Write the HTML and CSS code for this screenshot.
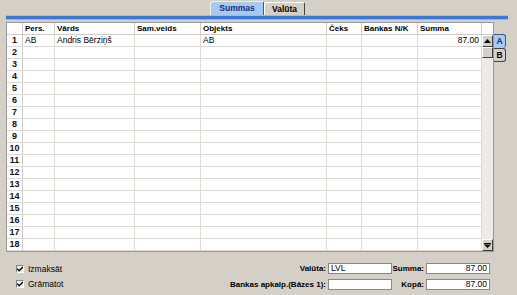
FILE: index.html
```html
<!doctype html>
<html lang="lv">
<head>
  <meta charset="utf-8"/>
  <title>Summas</title>
  <link rel="stylesheet" href="styles.css">
</head>
<body>
<div class="win">
  <div class="tabs">
    <div class="tab active">Summas</div>
    <div class="tab">Valūta</div>
  </div>
  <div class="rule"></div>

  <div class="main">
    <div class="grid">
      <div class="hd"></div><div class="hd">Pers.</div><div class="hd">Vārds</div><div class="hd">Sam.veids</div><div class="hd">Objekts</div><div class="hd">Čeks</div><div class="hd">Bankas N/K</div><div class="hd">Summa</div><div class="hd last"></div>

      <div class="scroll">
        <div class="sbtn"><svg width="7" height="4" viewBox="0 0 7 4"><path d="M3.5 0L7 4H0z" fill="#000"/></svg></div>
        <div class="thumb"></div>
        <div class="track"></div>
        <div class="sbtn"><svg width="7" height="5" viewBox="0 0 7 5"><path d="M0 0h7v1H0zM0 1.5h7L3.5 5z" fill="#000"/></svg></div>
      </div>

      <div class="rn">1</div><div>AB</div><div>Andris Bērziņš</div><div></div><div>AB</div><div></div><div></div><div class="num">87.00</div>
      <div class="rn">2</div><div></div><div></div><div></div><div></div><div></div><div></div><div></div>
      <div class="rn">3</div><div></div><div></div><div></div><div></div><div></div><div></div><div></div>
      <div class="rn">4</div><div></div><div></div><div></div><div></div><div></div><div></div><div></div>
      <div class="rn">5</div><div></div><div></div><div></div><div></div><div></div><div></div><div></div>
      <div class="rn">6</div><div></div><div></div><div></div><div></div><div></div><div></div><div></div>
      <div class="rn">7</div><div></div><div></div><div></div><div></div><div></div><div></div><div></div>
      <div class="rn">8</div><div></div><div></div><div></div><div></div><div></div><div></div><div></div>
      <div class="rn">9</div><div></div><div></div><div></div><div></div><div></div><div></div><div></div>
      <div class="rn">10</div><div></div><div></div><div></div><div></div><div></div><div></div><div></div>
      <div class="rn">11</div><div></div><div></div><div></div><div></div><div></div><div></div><div></div>
      <div class="rn">12</div><div></div><div></div><div></div><div></div><div></div><div></div><div></div>
      <div class="rn">13</div><div></div><div></div><div></div><div></div><div></div><div></div><div></div>
      <div class="rn">14</div><div></div><div></div><div></div><div></div><div></div><div></div><div></div>
      <div class="rn">15</div><div></div><div></div><div></div><div></div><div></div><div></div><div></div>
      <div class="rn">16</div><div></div><div></div><div></div><div></div><div></div><div></div><div></div>
      <div class="rn">17</div><div></div><div></div><div></div><div></div><div></div><div></div><div></div>
      <div class="rn">18</div><div></div><div></div><div></div><div></div><div></div><div></div><div></div>
    </div>

    <div class="sidetabs">
      <div class="stab active">A</div>
      <div class="stab">B</div>
    </div>
  </div>

  <div class="footer">
    <div class="checks">
      <label class="chk"><span class="box"><svg width="7" height="7" viewBox="0 0 7 7"><path d="M0 2.5l2.5 2.5L7 0.5" fill="none" stroke="#000" stroke-width="1.6"/></svg></span>Izmaksāt</label>
      <label class="chk"><span class="box"><svg width="7" height="7" viewBox="0 0 7 7"><path d="M0 2.5l2.5 2.5L7 0.5" fill="none" stroke="#000" stroke-width="1.6"/></svg></span>Grāmatot</label>
    </div>
    <div class="form">
      <span class="lbl">Valūta:</span><span class="inp">LVL</span>
      <span class="lbl">Summa:</span><span class="inp num">87.00</span>
      <span class="lbl">Bankas apkalp.(Bāzes 1):</span><span class="inp"></span>
      <span class="lbl">Kopā:</span><span class="inp num">87.00</span>
    </div>
  </div>
</div>
</body>
</html>
```

FILE: styles.css
```css
:root{--bg:#d4d0c8;--line:#dedbd6;--blue:#a8caf2;--navy:#0c2f78}
body{margin:0;background:var(--bg);font:8.5px "Liberation Sans",Arial,sans-serif;color:#000}
.win{width:517px;height:295px;overflow:hidden;position:relative}

.tabs{display:flex;align-items:flex-end;margin-left:210px;padding-top:1px;height:14px}
.tab{box-sizing:border-box;height:13px;padding:0 7px;font-weight:700;font-size:8.5px;line-height:12px;border:1px solid #fff;border-right-color:#404040;border-bottom:none;border-radius:3px 2px 0 0}
.tab.active{height:14px;width:54px;text-align:center;background:var(--blue);color:var(--navy);border-color:#e8f0fb #3a5a90 transparent #e8f0fb}
.rule{height:5px;margin:0 9px 0 6px;box-sizing:border-box;background:#3c78d8;border-top:1px solid #9cbcec;border-bottom:1px solid #8fb2e8}

.main{display:flex;align-items:flex-start;margin:2px 0 0 6px}
.grid{display:grid;grid-template-columns:16px 32px 80px 66px 126px 35px 56px 64px 11px;grid-auto-rows:12px;background:#fff;border:1px solid #9a9893}
.grid>div{box-sizing:border-box;border-right:1px solid var(--line);border-bottom:1px solid var(--line);padding:0 2px;line-height:11px;white-space:nowrap;overflow:hidden}
.grid>.hd{font-weight:700;font-size:8px;border-right-color:#cfccc6;border-bottom-color:#cfccc6}
.grid>.hd.last{border-right:none}
.grid>.rn{font-weight:700;font-size:9px;text-align:center;padding:0;color:#111;border-right-color:#cfccc6}
.grid>.num{text-align:right}

.grid>.scroll{grid-column:9;grid-row:2/20;display:flex;flex-direction:column;padding:0;border:none;background:#ecebe7}
.sbtn,.thumb{box-sizing:border-box;height:12px;background:var(--bg);border:1px solid;border-color:#fff #404040 #404040 #fff;display:flex;align-items:center;justify-content:center}
.thumb{height:11px}
.track{flex:1}

.sidetabs{display:flex;flex-direction:column;margin-top:12px}
.stab{box-sizing:border-box;width:12px;height:14px;font-weight:700;font-size:8.5px;line-height:13px;text-align:center;background:var(--bg);border:1px solid #404040;border-left:none;border-radius:0 3px 3px 0}
.stab.active{background:var(--blue);color:var(--navy);border-color:#3a5a90;border-bottom:none}

.footer{display:flex;justify-content:space-between;padding:11px 27px 0 16px}
.checks{display:flex;flex-direction:column;gap:7px;padding-top:2px}
.chk{display:flex;align-items:center;gap:4px;font-size:8.5px;line-height:8px}
.box{box-sizing:border-box;width:8px;height:8px;background:#f4f3f0;border:1px solid;border-color:#808080 #fff #fff #808080;display:flex;align-items:center;justify-content:center}
.form{display:grid;grid-template-columns:auto 64px 34px 64px;row-gap:5px;align-items:center}
.lbl{font-weight:700;font-size:8px;text-align:right;padding-right:2px;white-space:nowrap}
.inp{box-sizing:border-box;height:11px;background:#fff;border:1px solid #8a8883;padding:0 2px;line-height:9px}
.inp.num{text-align:right}
```
